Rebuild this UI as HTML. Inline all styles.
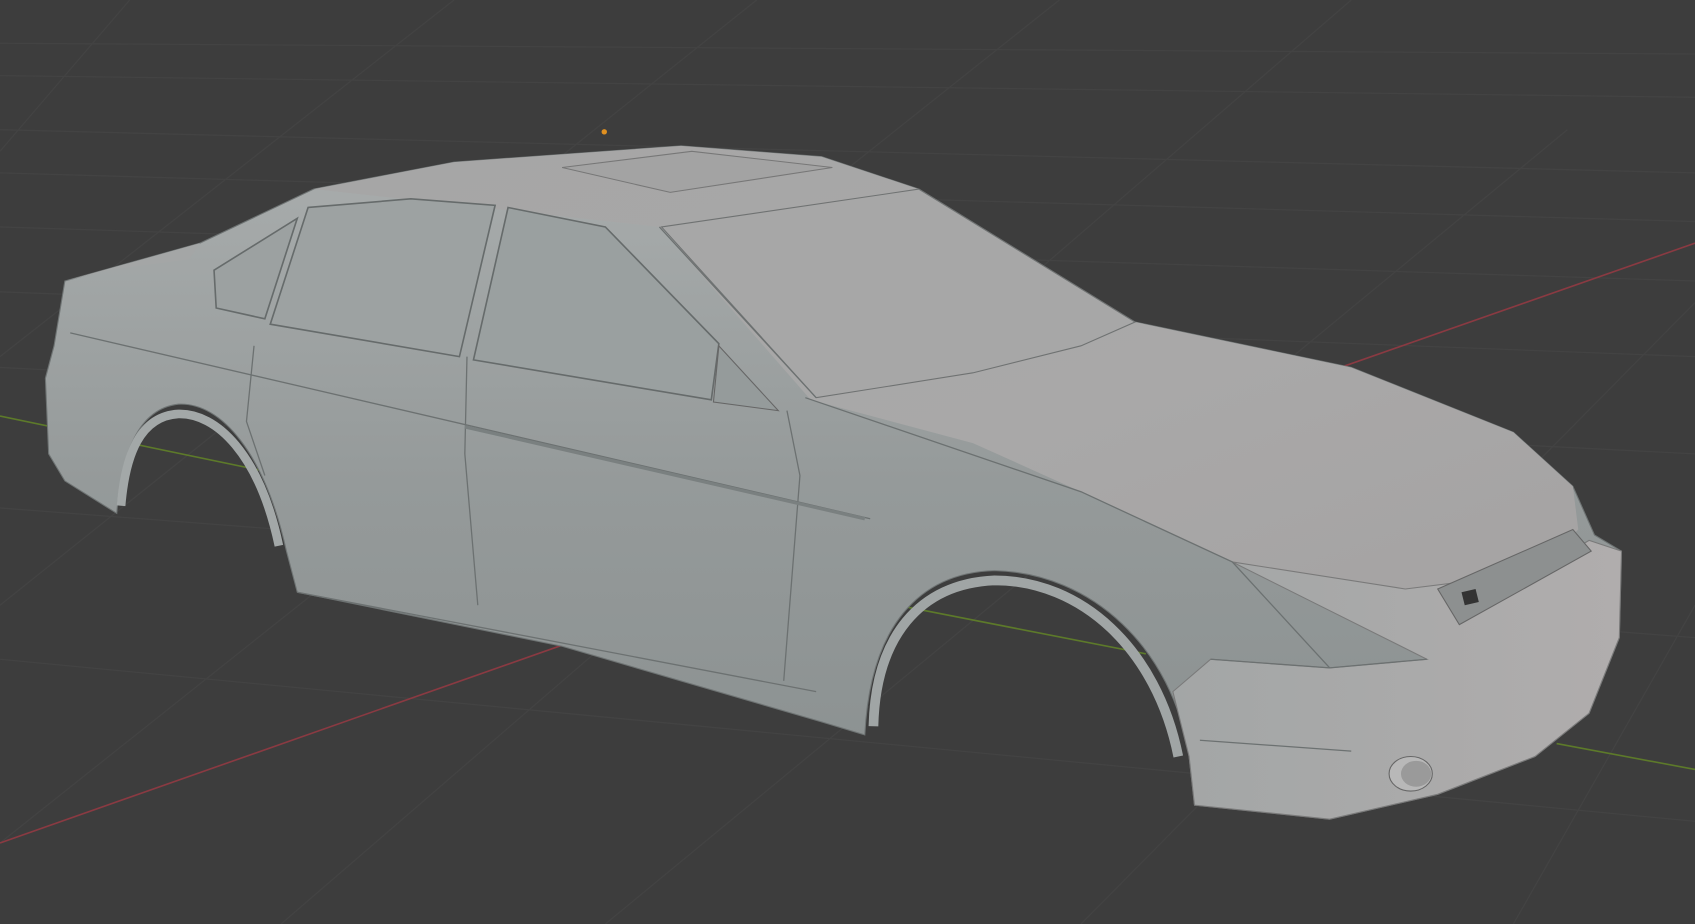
<!DOCTYPE html>
<html><head><meta charset="utf-8"><style>
html,body{margin:0;padding:0;background:#3d3d3d;overflow:hidden}
svg{display:block}
</style></head><body>
<svg width="1695" height="924" viewBox="0 0 1568 855" preserveAspectRatio="none" xmlns="http://www.w3.org/2000/svg">
<defs>
<linearGradient id="side" x1="0" y1="0" x2="0" y2="1">
<stop offset="0" stop-color="#a9adad"/><stop offset="0.5" stop-color="#959a9a"/><stop offset="1" stop-color="#8a9090"/>
</linearGradient>
<linearGradient id="top" x1="0" y1="0" x2="1" y2="1">
<stop offset="0" stop-color="#a6a6a6"/><stop offset="0.6" stop-color="#a9a8a8"/><stop offset="1" stop-color="#a5a3a3"/>
</linearGradient>
<linearGradient id="front" x1="0" y1="0" x2="1" y2="0">
<stop offset="0" stop-color="#a3a6a6"/><stop offset="1" stop-color="#b0adad"/>
</linearGradient>
</defs>
<rect width="1568" height="855" fill="#3d3d3d"/>
<g stroke="#434343" stroke-width="1.2" fill="none">
<path d="M0 120 L1568 160 M0 160 L1568 205 M0 210 L1568 260 M0 270 L1568 330 M0 340 L1568 420 M0 470 L1568 590 M0 610 L1568 760"/>
<path d="M120 0 L0 140 M420 0 L0 330 M700 0 L0 560 M980 0 L0 780 M1250 0 L260 855 M1450 120 L560 855 M1568 280 L1000 855 M1568 560 L1400 855"/>
<path d="M0 70 L1568 90 M0 40 L1568 50"/>
</g>
<path d="M0 780 L520 597 M1240 340 L1568 225" stroke="#8a3a42" stroke-width="1.5"/>
<path d="M0 385 L240 435 M830 560 L1060 605 M1440 688 L1568 712" stroke="#5d7a2a" stroke-width="1.5"/>
<path d="M60 260 L185 225 L290 175 L420 150 L630 135 L760 145 L850 175 L1050 298 L1250 340 L1400 400 L1455 450 L1475 495 L1500 510 L1498 590 L1470 660 L1420 700 L1330 735 L1230 758 L1105 745 L1100 700 C1085 600 1010 530 920 528 C850 530 805 580 800 680 L760 668 L520 598 L275 548 L265 510 C245 420 205 372 165 374 C128 378 112 420 108 475 L60 445 L45 420 L42 350 L50 320 Z" fill="url(#side)" stroke="#6f7474" stroke-width="1"/>
<path d="M112 468 C116 420 130 385 165 383 C200 382 240 420 258 505" stroke="#a3a8a8" stroke-width="8" fill="none"/>
<path d="M808 672 C810 590 850 540 920 537 C1000 537 1070 600 1090 700" stroke="#a0a5a5" stroke-width="9" fill="none"/>
<path d="M290 175 L420 150 L630 135 L760 145 L850 175 L1050 298 L1250 340 L1400 400 L1455 450 L1460 490 L1420 530 L1300 545 L1140 520 L1000 455 L900 410 L750 370 L610 210 Z" fill="url(#top)"/>
<path d="M612 210 L850 175 L1050 298 L1000 320 L900 345 L755 368 Z" fill="#a7a7a7" stroke="#6f7272" stroke-width="1"/>
<path d="M520 155 L640 140 L770 155 L620 178 Z" fill="#a3a3a3" stroke="#777" stroke-width="1"/>
<path d="M1140 520 L1300 545 L1420 530 L1470 500 L1500 510 L1498 590 L1470 660 L1420 700 L1330 735 L1230 758 L1105 745 L1100 700 L1085 640 L1120 610 L1230 618 L1320 610 Z" fill="url(#front)" stroke="#7a7a7a" stroke-width="1"/>
<path d="M1330 545 L1455 490 L1472 510 L1350 578 Z" fill="#8d9090" stroke="#666" stroke-width="1"/>
<path d="M1352 548 L1365 545 L1368 557 L1355 560 Z" fill="#333"/>
<ellipse cx="1305" cy="716" rx="20" ry="16" fill="#b8b8b8" stroke="#666"/>
<ellipse cx="1310" cy="716" rx="14" ry="12" fill="#9a9a9a"/>
<path d="M198 250 L275 202 L245 295 L200 285 Z" fill="#9ca1a1" stroke="#666b6b" stroke-width="1.5"/>
<path d="M285 192 L380 184 L458 190 L425 330 L250 300 Z" fill="#9da2a2" stroke="#666b6b" stroke-width="1.5"/>
<path d="M470 192 L560 210 L665 318 L658 370 L438 333 Z" fill="#9aa0a0" stroke="#666b6b" stroke-width="1.5"/>
<path d="M665 320 L720 380 L660 372 Z" fill="#959b9b" stroke="#666" stroke-width="1"/>
<path d="M60 260 L185 225 L175 240 L100 250 Z" fill="#a4a6a6"/>
<g stroke="#6c7171" stroke-width="1.2" fill="none">
<path d="M65 308 L805 480"/>
<path d="M235 320 L228 390 L245 440"/>
<path d="M432 330 L430 420 L442 560"/>
<path d="M728 380 L740 440 L725 630"/>
<path d="M745 368 L1000 455 L1140 520 L1230 618"/>
<path d="M275 548 L755 640"/>
<path d="M1110 685 L1250 695"/>
<path d="M1120 610 L1230 618 L1320 610"/>
<path d="M610 210 L755 368"/>
</g>
<path d="M430 395 L800 480" stroke="#7a8080" stroke-width="3"/>
<circle cx="559" cy="122" r="2.5" fill="#e09020"/>
</svg>
</body></html>
